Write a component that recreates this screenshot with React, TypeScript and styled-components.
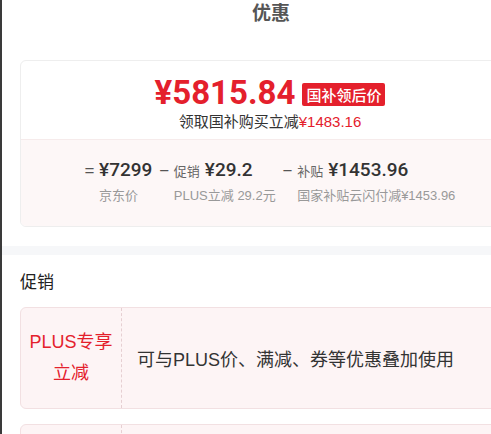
import React from "react";
import styled, { createGlobalStyle } from "styled-components";

const GlobalStyle = createGlobalStyle`
  html, body { margin: 0; padding: 0; background: #fff; overflow: hidden; }
  body { font-family: "Liberation Sans", "Noto Sans CJK SC", sans-serif; color: #333; }
`;

const Page = styled.div`
  width: 540px;
  min-height: 434px;
  border-left: 2px solid #3a3a3a;
  box-sizing: border-box;
  background: #fff;
`;

const Header = styled.div`
  height: 28px;
  line-height: 28px;
  text-align: center;
  font-size: 19px;
  font-weight: 700;
  color: #555;
`;

const Section = styled.div`
  padding: 32px 20px 19px 18px;
`;

const Card = styled.div`
  border: 1px solid #eee;
  border-radius: 6px;
  overflow: hidden;
`;

const CardTop = styled.div`
  padding: 11px 0 7px;
  display: flex;
  flex-direction: column;
  align-items: center;
`;

const PriceRow = styled.div`
  height: 40px;
  display: flex;
  align-items: center;
  gap: 7px;
`;

const Price = styled.span`
  font-family: Roboto, "Noto Sans", sans-serif;
  font-weight: 700;
  font-size: 33px;
  color: #e4202c;
`;

const Badge = styled.span`
  background: #e4202c;
  color: #fff;
  font-family: "Noto Sans CJK SC", sans-serif;
  font-size: 15px;
  font-weight: 500;
  height: 23px;
  line-height: 23px;
  padding: 0 4px;
  border-radius: 2px;
  margin-top: 4px;
`;

const Sub = styled.div`
  font-size: 15px;
  line-height: 20px;
  color: #333;
`;

const Red = styled.span`
  color: #e4202c;
`;

const CardBottom = styled.div`
  background: #fdf7f7;
  border-top: 1px solid #f6ebeb;
  padding: 17px 0 20px;
  display: flex;
  justify-content: center;
  gap: 7px;
`;

const Term = styled.div`
  display: flex;
  align-items: flex-start;
  gap: 5px;
`;

const Op = styled.span`
  font-family: "Noto Sans CJK SC", sans-serif;
  font-size: 17px;
  line-height: 26px;
  color: #555;
`;

const TermBody = styled.div`
  display: flex;
  flex-direction: column;
`;

const ValueLine = styled.div`
  display: flex;
  align-items: baseline;
  gap: 5px;
  height: 26px;
  line-height: 26px;
`;

const SmallLabel = styled.span`
  font-size: 13px;
  color: #666;
`;

const Value = styled.span`
  font-family: Roboto, "Noto Sans", sans-serif;
  font-weight: 500;
  font-size: 19px;
  color: #333;
`;

const Caption = styled.div`
  margin-top: 3px;
  font-size: 13px;
  line-height: 20px;
  color: #999;
`;

const Band = styled.div`
  height: 9px;
  background: #f6f7f9;
`;

const PromoSection = styled.div`
  padding: 16px 20px 0 18px;
`;

const PromoTitle = styled.div`
  font-size: 17px;
  line-height: 24px;
  color: #222;
  margin-bottom: 12px;
`;

const PromoCard = styled.div`
  display: flex;
  height: 102px;
  background: #fdf4f5;
  border: 1px solid #f2e0e2;
  border-radius: 6px;
  margin-bottom: 15px;
  box-sizing: border-box;
`;

const PromoTag = styled.div`
  width: 100px;
  flex: none;
  border-right: 1px dashed #e6cfd2;
  display: flex;
  align-items: center;
  justify-content: center;
  text-align: center;
  font-size: 18px;
  line-height: 31px;
  color: #e4202c;
`;

const PromoText = styled.div`
  flex: 1;
  display: flex;
  align-items: center;
  padding-left: 15px;
  font-size: 18px;
  color: #333;
`;

const terms = [
  { op: "=", label: "", value: "¥7299", caption: "京东价" },
  { op: "−", label: "促销", value: "¥29.2", caption: "PLUS立减 29.2元" },
  { op: "−", label: "补贴", value: "¥1453.96", caption: "国家补贴云闪付减¥1453.96" },
];

export default function App() {
  return (
    <Page>
      <GlobalStyle />
      <Header>优惠</Header>
      <Section>
        <Card>
          <CardTop>
            <PriceRow>
              <Price>¥5815.84</Price>
              <Badge>国补领后价</Badge>
            </PriceRow>
            <Sub>
              领取国补购买立减<Red>¥1483.16</Red>
            </Sub>
          </CardTop>
          <CardBottom>
            {terms.map((t) => (
              <Term key={t.caption}>
                <Op>{t.op}</Op>
                <TermBody>
                  <ValueLine>
                    {t.label && <SmallLabel>{t.label}</SmallLabel>}
                    <Value>{t.value}</Value>
                  </ValueLine>
                  <Caption>{t.caption}</Caption>
                </TermBody>
              </Term>
            ))}
          </CardBottom>
        </Card>
      </Section>
      <Band />
      <PromoSection>
        <PromoTitle>促销</PromoTitle>
        <PromoCard>
          <PromoTag>
            PLUS专享
            <br />
            立减
          </PromoTag>
          <PromoText>可与PLUS价、满减、券等优惠叠加使用</PromoText>
        </PromoCard>
        <PromoCard>
          <PromoTag />
          <PromoText />
        </PromoCard>
      </PromoSection>
    </Page>
  );
}
